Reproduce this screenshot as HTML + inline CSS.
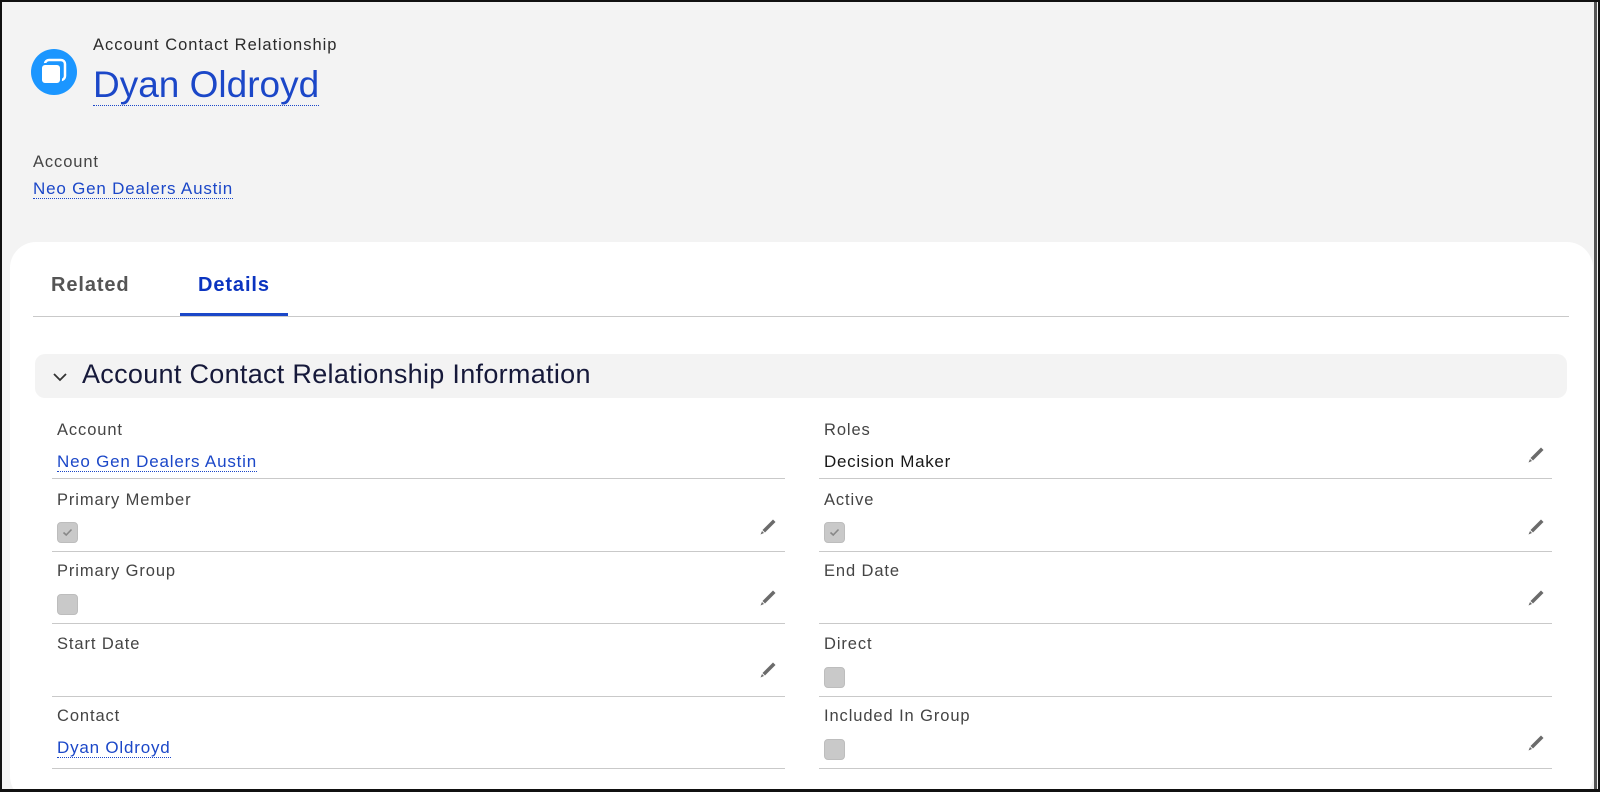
<!DOCTYPE html>
<html><head><meta charset="utf-8"><style>
*{box-sizing:border-box;margin:0;padding:0}
html,body{width:1600px;height:792px;overflow:hidden}
body{font-family:"Liberation Sans",sans-serif;background:#fff;position:relative}
.frame{position:absolute;left:0;top:0;width:1600px;height:792px;border:2px solid #111;border-bottom-width:3px;background:#f3f3f3;overflow:hidden}
.abs{position:absolute;white-space:nowrap}
.lnk{color:#1b47c8;text-decoration:none;border-bottom:1px dotted #1b47c8}
.card{position:absolute;left:8px;top:240px;width:1583px;height:560px;background:#fff;border-radius:26px}
.lbl{font-size:16.5px;color:#444;letter-spacing:0.9px}
.val{font-size:17px;color:#181818;letter-spacing:0.7px}
.lv{font-size:17px;letter-spacing:0.8px}
.div{position:absolute;height:1px;background:#c9c9c9}
.cb{position:absolute;width:21px;height:21px;border-radius:4px;background:#c9c9c9;border:1px solid #bdbdbd}
.cb svg{position:absolute;left:4px;top:5px}
.pen{position:absolute;width:20px;height:20px}
</style></head><body><div class="frame">
<svg class="abs" style="left:29px;top:47px" width="46" height="46" viewBox="0 0 46 46"><circle cx="23" cy="23" r="23" fill="#1b96ff"/><rect x="14" y="11" width="20" height="20" rx="4" fill="none" stroke="#fff" stroke-width="2.5"/><rect x="10" y="15" width="20" height="20" rx="4" fill="#fff" stroke="#1b96ff" stroke-width="2"/></svg>
<div class="abs" style="left:91px;top:34px;font-size:16.5px;color:#2b2b2b;letter-spacing:1px">Account Contact Relationship</div>
<div class="abs" style="left:91px;top:61px;font-size:37px;line-height:44px"><span class="lnk">Dyan Oldroyd</span></div>
<div class="abs lbl" style="left:31px;top:151px">Account</div>
<div class="abs lv" style="left:31px;top:177px"><span class="lnk">Neo Gen Dealers Austin</span></div>
<div class="card"></div>
<div class="abs" style="left:49px;top:272px;font-size:20px;font-weight:bold;color:#555;letter-spacing:0.9px">Related</div>
<div class="abs" style="left:196px;top:272px;font-size:20px;font-weight:bold;color:#0b34c0;letter-spacing:0.9px">Details</div>
<div class="div" style="left:31px;top:314px;width:1536px"></div>
<div class="abs" style="left:178px;top:311px;width:108px;height:3px;background:#1b47c8"></div>
<div class="abs" style="left:33px;top:352px;width:1532px;height:44px;background:#f3f3f3;border-radius:10px"></div>
<svg class="abs" style="left:50px;top:369px" width="16" height="12" viewBox="0 0 16 12"><path d="M2 3 L8 9 L14 3" fill="none" stroke="#333" stroke-width="1.8"/></svg>
<div class="abs" style="left:80px;top:357px;font-size:27px;color:#16193a;letter-spacing:0.3px">Account Contact Relationship Information</div>

<div class="abs lbl" style="left:55px;top:419px">Account</div>
<div class="abs lv" style="left:55px;top:450px"><span class="lnk">Neo Gen Dealers Austin</span></div>
<div class="div" style="left:50px;top:476px;width:733px"></div>
<div class="abs lbl" style="left:55px;top:489px">Primary Member</div>
<div class="cb" style="left:55px;top:520px"><svg width="11" height="9" viewBox="0 0 11 9"><path d="M1.5 4.5 L4.2 7 L9.5 1.5" fill="none" stroke="#888" stroke-width="1.6"/></svg></div>
<div class="div" style="left:50px;top:549px;width:733px"></div>
<div class="abs lbl" style="left:55px;top:560px">Primary Group</div>
<div class="cb" style="left:55px;top:592px"></div>
<div class="div" style="left:50px;top:621px;width:733px"></div>
<div class="abs lbl" style="left:55px;top:633px">Start Date</div>
<div class="div" style="left:50px;top:694px;width:733px"></div>
<div class="abs lbl" style="left:55px;top:705px">Contact</div>
<div class="abs lv" style="left:55px;top:736px"><span class="lnk">Dyan Oldroyd</span></div>
<div class="div" style="left:50px;top:766px;width:733px"></div>

<div class="abs lbl" style="left:822px;top:419px">Roles</div>
<div class="abs val" style="left:822px;top:450px">Decision Maker</div>
<div class="div" style="left:817px;top:476px;width:733px"></div>
<div class="abs lbl" style="left:822px;top:489px">Active</div>
<div class="cb" style="left:822px;top:520px"><svg width="11" height="9" viewBox="0 0 11 9"><path d="M1.5 4.5 L4.2 7 L9.5 1.5" fill="none" stroke="#888" stroke-width="1.6"/></svg></div>
<div class="div" style="left:817px;top:549px;width:733px"></div>
<div class="abs lbl" style="left:822px;top:560px">End Date</div>
<div class="div" style="left:817px;top:621px;width:733px"></div>
<div class="abs lbl" style="left:822px;top:633px">Direct</div>
<div class="cb" style="left:822px;top:665px"></div>
<div class="div" style="left:817px;top:694px;width:733px"></div>
<div class="abs lbl" style="left:822px;top:705px">Included In Group</div>
<div class="cb" style="left:822px;top:737px"></div>
<div class="div" style="left:817px;top:766px;width:733px"></div>

<svg class="pen" style="left:756px;top:515px" viewBox="0 0 20 20"><path d="M15 2.5 L17.5 5 L7 15.5 L4.5 13 Z" fill="#6b6b6b"/><path d="M4 14 L6 16 L2.5 17.5 Z" fill="#6b6b6b"/></svg>
<svg class="pen" style="left:756px;top:586px" viewBox="0 0 20 20"><path d="M15 2.5 L17.5 5 L7 15.5 L4.5 13 Z" fill="#6b6b6b"/><path d="M4 14 L6 16 L2.5 17.5 Z" fill="#6b6b6b"/></svg>
<svg class="pen" style="left:756px;top:658px" viewBox="0 0 20 20"><path d="M15 2.5 L17.5 5 L7 15.5 L4.5 13 Z" fill="#6b6b6b"/><path d="M4 14 L6 16 L2.5 17.5 Z" fill="#6b6b6b"/></svg>
<svg class="pen" style="left:1524px;top:443px" viewBox="0 0 20 20"><path d="M15 2.5 L17.5 5 L7 15.5 L4.5 13 Z" fill="#6b6b6b"/><path d="M4 14 L6 16 L2.5 17.5 Z" fill="#6b6b6b"/></svg>
<svg class="pen" style="left:1524px;top:515px" viewBox="0 0 20 20"><path d="M15 2.5 L17.5 5 L7 15.5 L4.5 13 Z" fill="#6b6b6b"/><path d="M4 14 L6 16 L2.5 17.5 Z" fill="#6b6b6b"/></svg>
<svg class="pen" style="left:1524px;top:586px" viewBox="0 0 20 20"><path d="M15 2.5 L17.5 5 L7 15.5 L4.5 13 Z" fill="#6b6b6b"/><path d="M4 14 L6 16 L2.5 17.5 Z" fill="#6b6b6b"/></svg>
<svg class="pen" style="left:1524px;top:731px" viewBox="0 0 20 20"><path d="M15 2.5 L17.5 5 L7 15.5 L4.5 13 Z" fill="#6b6b6b"/><path d="M4 14 L6 16 L2.5 17.5 Z" fill="#6b6b6b"/></svg>
<div class="abs" style="left:1592px;top:0;width:3px;height:790px;background:#555"></div>
</div></body></html>
